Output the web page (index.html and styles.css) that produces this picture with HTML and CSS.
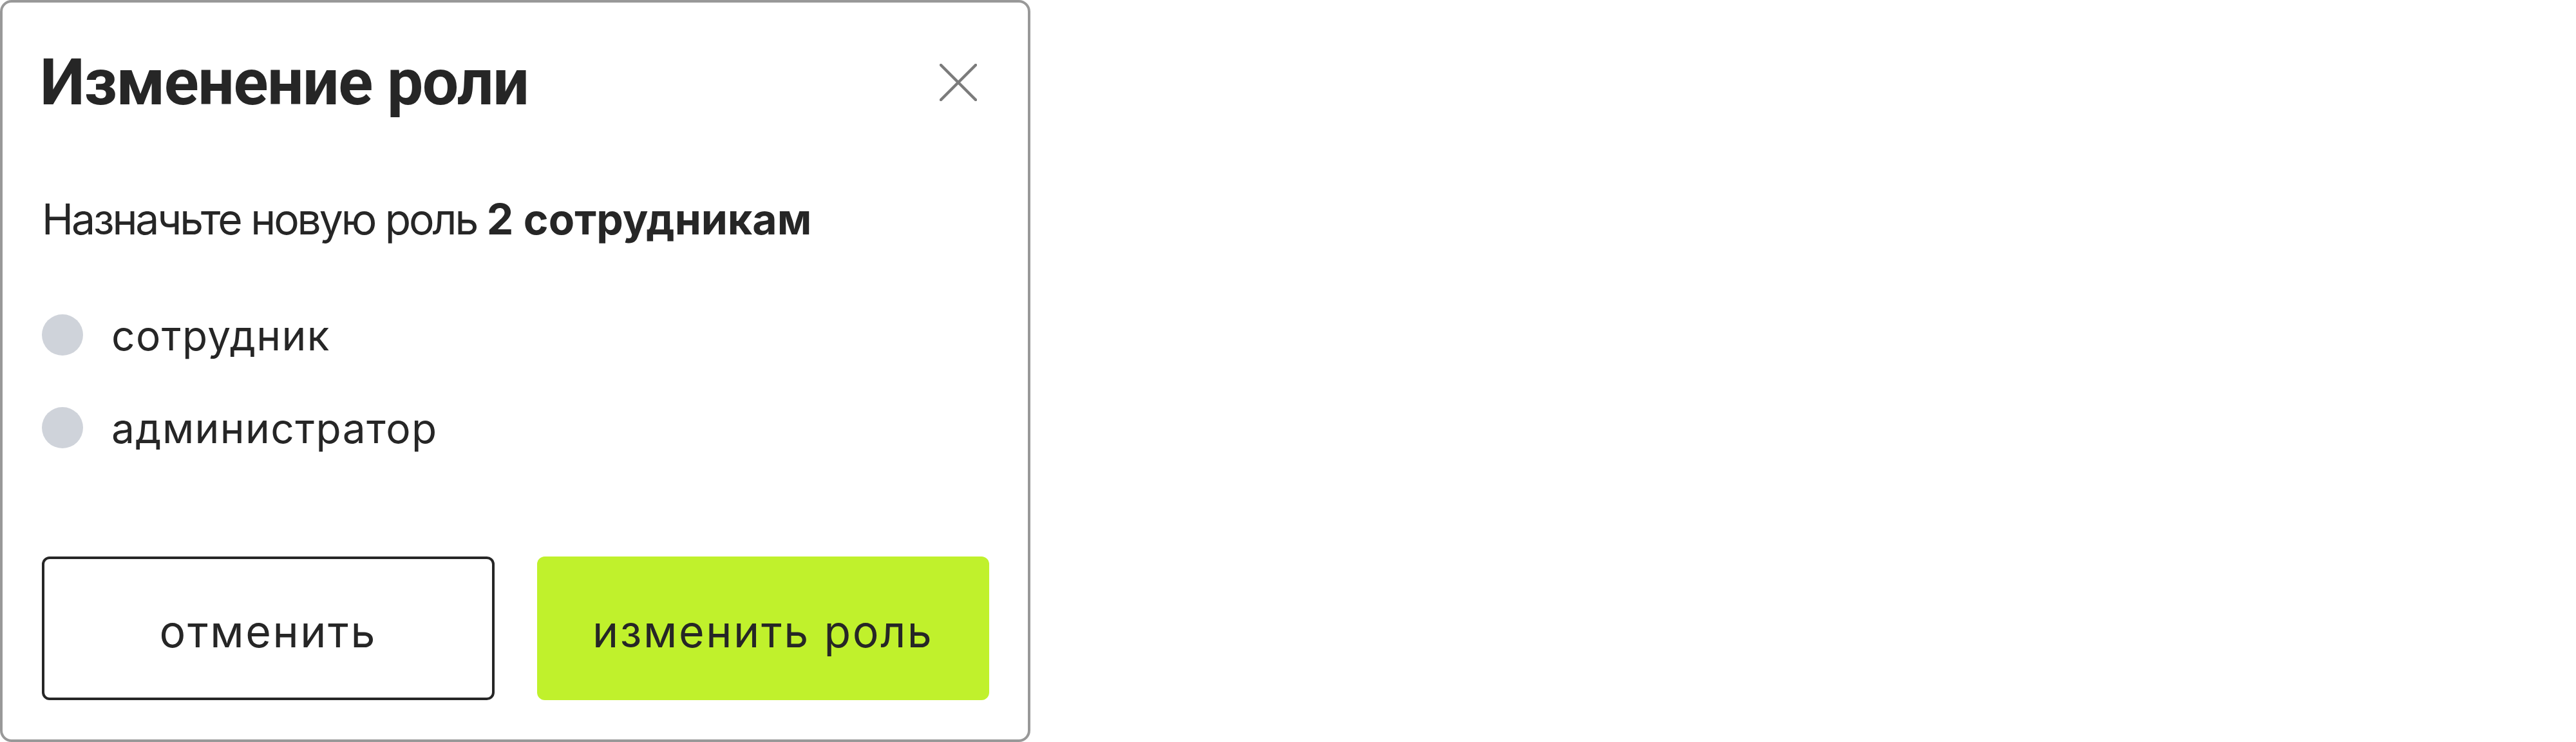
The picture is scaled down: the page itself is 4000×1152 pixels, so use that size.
FILE: index.html
```html
<!DOCTYPE html>
<html>
<head>
  <meta charset="UTF-8">
  <title>Изменение роли</title>
  <link rel="stylesheet" href="styles.css">
</head>
<body>
  <div class="modal">
    <div class="modal-header">
      <h2 class="modal-title">Изменение роли</h2>
      <button class="close-button" type="button" aria-label="Закрыть">
        <svg viewBox="0 0 58 58" width="58" height="58">
          <path d="M2 2 L56 56 M56 2 L2 56" stroke="#7b7b7b" stroke-width="4.5" stroke-linecap="round" fill="none"/>
        </svg>
      </button>
    </div>
    <p class="modal-text">Назначьте новую роль <b>2 сотрудникам</b></p>
    <div class="role-list">
      <label class="role-option"><span class="radio"></span><span class="role-name">сотрудник</span></label>
      <label class="role-option"><span class="radio"></span><span class="role-name">администратор</span></label>
    </div>
    <div class="modal-footer">
      <button class="btn btn-outline" type="button">отменить</button>
      <button class="btn btn-primary" type="button">изменить роль</button>
    </div>
  </div>
</body>
</html>
```

FILE: styles.css
```css
body {
  margin: 0;
  font-family: "Inter", "Noto Sans", sans-serif;
  color: #262626;
  background: #fff;
}
/* Modal */
.modal {
  box-sizing: border-box;
  width: 1600px;
  height: 1152px;
  padding: 64px 60px 61px 61px;
  border: 4px solid #999;
  border-radius: 18px;
  background: #fff;
  display: flex;
  flex-direction: column;
}
.modal-header {
  display: flex;
  align-items: center;
  justify-content: space-between;
}
.modal-title {
  margin: 0 0 0 -3px;
  font-family: "Roboto", "Inter", sans-serif;
  font-size: 100px;
  line-height: 120px;
  font-weight: 700;
  letter-spacing: -1.5px;
}
.close-button {
  width: 96px;
  height: 96px;
  padding: 0;
  border: none;
  background: none;
  display: flex;
  align-items: center;
  justify-content: center;
  cursor: pointer;
}
.modal-text {
  margin: 112px 0 0;
  font-size: 66px;
  line-height: 80px;
  letter-spacing: -3.1px;
}
.modal-text b {
  font-weight: 700;
  letter-spacing: 0;
}
/* Role radio list */
.role-list {
  margin-top: 108px;
  display: flex;
  flex-direction: column;
  gap: 80px;
}
.role-option {
  display: flex;
  align-items: center;
  height: 64px;
  font-size: 64px;
  letter-spacing: 1.4px;
  cursor: pointer;
}
.radio {
  flex: none;
  width: 64px;
  height: 64px;
  border-radius: 50%;
  background: #cfd3da;
  margin-right: 44px;
}
/* Footer buttons */
.modal-footer {
  margin-top: auto;
  display: grid;
  grid-template-columns: 1fr 1fr;
  gap: 66px;
}
.btn {
  box-sizing: border-box;
  height: 223px;
  padding: 8px 0 0;
  border-radius: 12px;
  font-family: inherit;
  font-size: 68px;
  letter-spacing: 2.6px;
  color: #262626;
  cursor: pointer;
}
.btn-outline {
  background: #fff;
  border: 4px solid #262626;
}
.btn-primary {
  background: #c0f12c;
  border: none;
}
```
